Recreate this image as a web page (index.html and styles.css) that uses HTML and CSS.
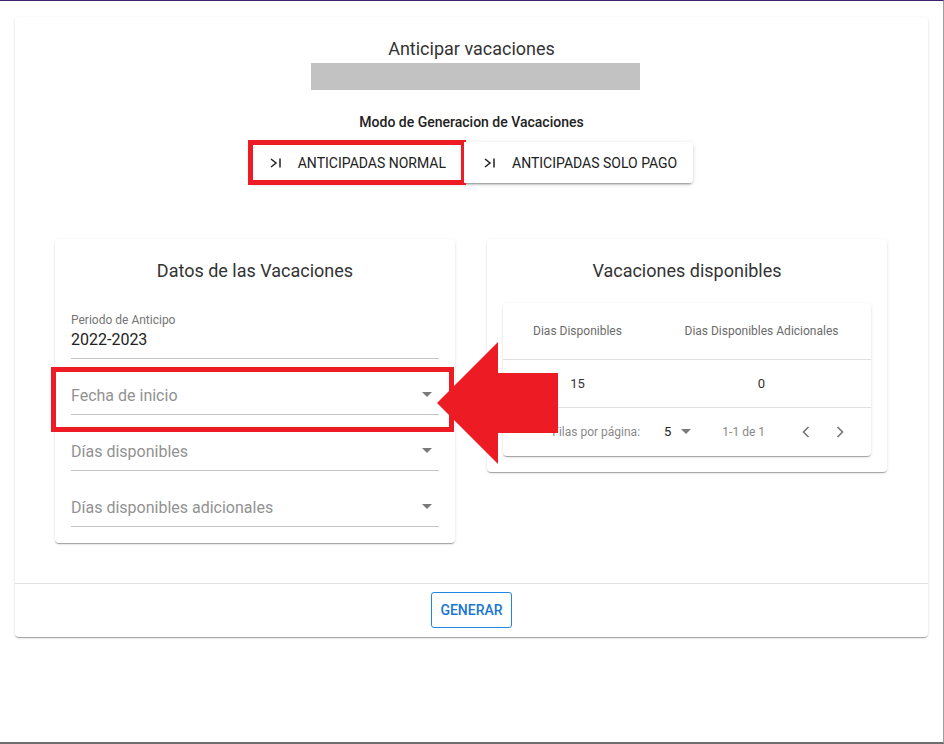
FILE: index.html
```html
<!DOCTYPE html>
<html lang="es">
<head>
    <meta charset="UTF-8">
    <title>Anticipar vacaciones</title>
    <link rel="stylesheet" href="styles.css">
</head>
<body>
<div class="screen">
    <div class="card main">
        <div class="head">
            <h1 class="title">Anticipar vacaciones</h1>
            <div class="name-bar"></div>
            <p class="mode-label">Modo de Generacion de Vacaciones</p>
            <div class="toggle">
                <button class="toggle-btn marked">
                    <svg class="tab-icon" viewBox="0 0 24 24"><path d="M5 8l5 4-5 4M14 7.5v9"/></svg>
                    ANTICIPADAS NORMAL
                </button>
                <button class="toggle-btn">
                    <svg class="tab-icon" viewBox="0 0 24 24"><path d="M5 8l5 4-5 4M14 7.5v9"/></svg>
                    ANTICIPADAS SOLO PAGO
                </button>
            </div>
        </div>

        <div class="panels">
            <!-- datos de las vacaciones -->
            <section class="card panel">
                <h2 class="panel-title">Datos de las Vacaciones</h2>
                <div class="field">
                    <label class="field-label">Periodo de Anticipo</label>
                    <div class="field-value">2022-2023</div>
                </div>
                <div class="field select marked">
                    <div class="field-value empty">Fecha de inicio</div>
                    <span class="caret"></span>
                </div>
                <div class="field select">
                    <div class="field-value empty">Días disponibles</div>
                    <span class="caret"></span>
                </div>
                <div class="field select">
                    <div class="field-value empty">Días disponibles adicionales</div>
                    <span class="caret"></span>
                </div>
            </section>

            <!-- vacaciones disponibles -->
            <section class="card panel">
                <h2 class="panel-title">Vacaciones disponibles</h2>
                <div class="card table-card">
                    <table class="data-table">
                        <thead>
                        <tr>
                            <th class="col-dias">Dias Disponibles</th>
                            <th class="col-adic">Dias Disponibles Adicionales</th>
                        </tr>
                        </thead>
                        <tbody>
                        <tr>
                            <td>15</td>
                            <td>0</td>
                        </tr>
                        </tbody>
                    </table>
                    <div class="table-footer">
                        <span class="rows-label">Filas por página:</span>
                        <span class="rows-select">5 <span class="caret"></span></span>
                        <span class="page-info">1-1 de 1</span>
                        <span class="pager">
                            <svg viewBox="0 0 24 24"><path d="M14.5 7l-5 5 5 5"/></svg>
                            <svg viewBox="0 0 24 24"><path d="M9.5 7l5 5-5 5"/></svg>
                        </span>
                    </div>
                </div>
            </section>
        </div>

        <div class="actions">
            <button class="btn-outline">GENERAR</button>
        </div>
    </div>

    <svg class="arrow" viewBox="0 0 121 123">
        <polygon points="0,61 61,0 61,31 121,31 121,91 61,91 61,122"/>
    </svg>
</div>
</body>
</html>
```

FILE: styles.css
```css
* {
    margin: 0;
    padding: 0;
    box-sizing: border-box;
}

body {
    font-family: Roboto, "Liberation Sans", sans-serif;
    color: #212121;
    background: #fff;
}

button {
    font-family: inherit;
    cursor: pointer;
}

.screen {
    position: relative;
    width: 944px;
    height: 744px;
    border-top: 1px solid #3d2170;
    border-right: 1px solid #a0a0a0;
    border-bottom: 2px solid #6e6e6e;
    padding: 16px 15px 0 15px;
}

.card {
    background: #fff;
    border-radius: 4px;
    box-shadow: 0 2px 1px -1px rgba(0, 0, 0, .2), 0 1px 1px 0 rgba(0, 0, 0, .14), 0 1px 3px 0 rgba(0, 0, 0, .12);
}

.main {
    width: 913px;
}

/* cabecera */
.head {
    display: flex;
    flex-direction: column;
    align-items: center;
    padding-top: 20px;
}

.title {
    font-size: 18px;
    font-weight: 400;
    line-height: 24px;
    color: #333;
}

.name-bar {
    width: 329px;
    height: 27px;
    margin-top: 2px;
    margin-left: 8px;
    background: #c2c2c2;
}

.mode-label {
    margin-top: 22px;
    font-size: 14px;
    font-weight: 500;
    line-height: 20px;
    color: #222;
}

.toggle {
    display: flex;
    margin-top: 10px;
    border-radius: 4px;
    box-shadow: 0 3px 1px -2px rgba(0, 0, 0, .2), 0 2px 2px 0 rgba(0, 0, 0, .14), 0 1px 5px 0 rgba(0, 0, 0, .12);
}

.toggle-btn {
    position: relative;
    display: flex;
    align-items: center;
    height: 41px;
    padding: 0 16px 0 16px;
    border: none;
    background: #fff;
    font-size: 14px;
    font-weight: 400;
    color: #212121;
}

.toggle-btn:first-child {
    border-radius: 4px 0 0 4px;
    padding-right: 18px;
}

.toggle-btn:last-child {
    border-radius: 0 4px 4px 0;
}

.tab-icon {
    width: 24px;
    height: 24px;
    margin-right: 8px;
    fill: none;
    stroke: #222;
    stroke-width: 1.5;
}

/* recuadro rojo de aviso */
.marked::after {
    content: '';
    position: absolute;
    border: 5px solid #ed1c24;
    pointer-events: none;
}

.toggle-btn.marked::after {
    left: -2px;
    right: -2px;
    top: -2px;
    bottom: -2px;
}

/* paneles */
.panels {
    display: grid;
    grid-template-columns: 400px 400px;
    gap: 32px;
    padding: 56px 41px 40px 40px;
    align-items: start;
    border-bottom: 1px solid #e2e2e2;
}

.panel {
    padding: 0 16px 16px;
}

.panel-title {
    font-size: 18px;
    font-weight: 400;
    line-height: 28px;
    text-align: center;
    color: #333;
    padding: 18px 0 18px;
}

.field {
    position: relative;
    height: 56px;
    border-bottom: 1px solid #c4c4c4;
    display: flex;
    flex-direction: column;
    justify-content: flex-end;
    padding-bottom: 6px;
}

.field-label {
    font-size: 12px;
    line-height: 16px;
    color: #757575;
}

.field-value {
    font-size: 16px;
    line-height: 24px;
    color: #212121;
}

.field-value.empty {
    color: #929292;
}

.field.select .caret {
    position: absolute;
    right: 7px;
    bottom: 17px;
}

.field.marked::after {
    left: -20px;
    right: -15px;
    top: 8px;
    bottom: -18px;
}

.caret {
    display: inline-block;
    width: 0;
    height: 0;
    border-left: 5px solid transparent;
    border-right: 5px solid transparent;
    border-top: 5px solid #7a7a7a;
}

/* tabla */
.table-card {
    overflow: hidden;
}

.data-table {
    width: 100%;
    border-collapse: collapse;
    table-layout: fixed;
}

.data-table .col-dias {
    width: 149px;
}

.data-table th {
    height: 56px;
    font-size: 12px;
    font-weight: 400;
    color: #6b6b6b;
    border-bottom: 1px solid #e0e0e0;
}

.data-table td {
    height: 48px;
    font-size: 13px;
    text-align: center;
    color: #333;
    border-bottom: 1px solid #e0e0e0;
}

.table-footer {
    display: flex;
    align-items: center;
    justify-content: flex-end;
    height: 48px;
    padding-right: 19px;
    font-size: 12px;
    color: #8a8a8a;
}

.rows-select {
    display: flex;
    align-items: center;
    gap: 10px;
    margin-left: 24px;
    font-size: 13px;
    color: #222;
}

.page-info {
    margin-left: 31px;
}

.pager {
    display: flex;
    gap: 10px;
    margin-left: 29px;
}

.pager svg {
    width: 24px;
    height: 24px;
    fill: none;
    stroke: #757575;
    stroke-width: 1.6;
}

/* acciones */
.actions {
    display: flex;
    justify-content: center;
    padding: 8px 0 9px;
}

.btn-outline {
    height: 36px;
    padding: 0 8px;
    border: 1px solid #1e88e5;
    border-radius: 3px;
    background: #fff;
    color: #1976d2;
    font-size: 14px;
    font-weight: 500;
}

/* flecha roja */
.arrow {
    position: absolute;
    left: 437px;
    top: 341px;
    width: 121px;
    height: 123px;
    fill: #ed1c24;
}
```
